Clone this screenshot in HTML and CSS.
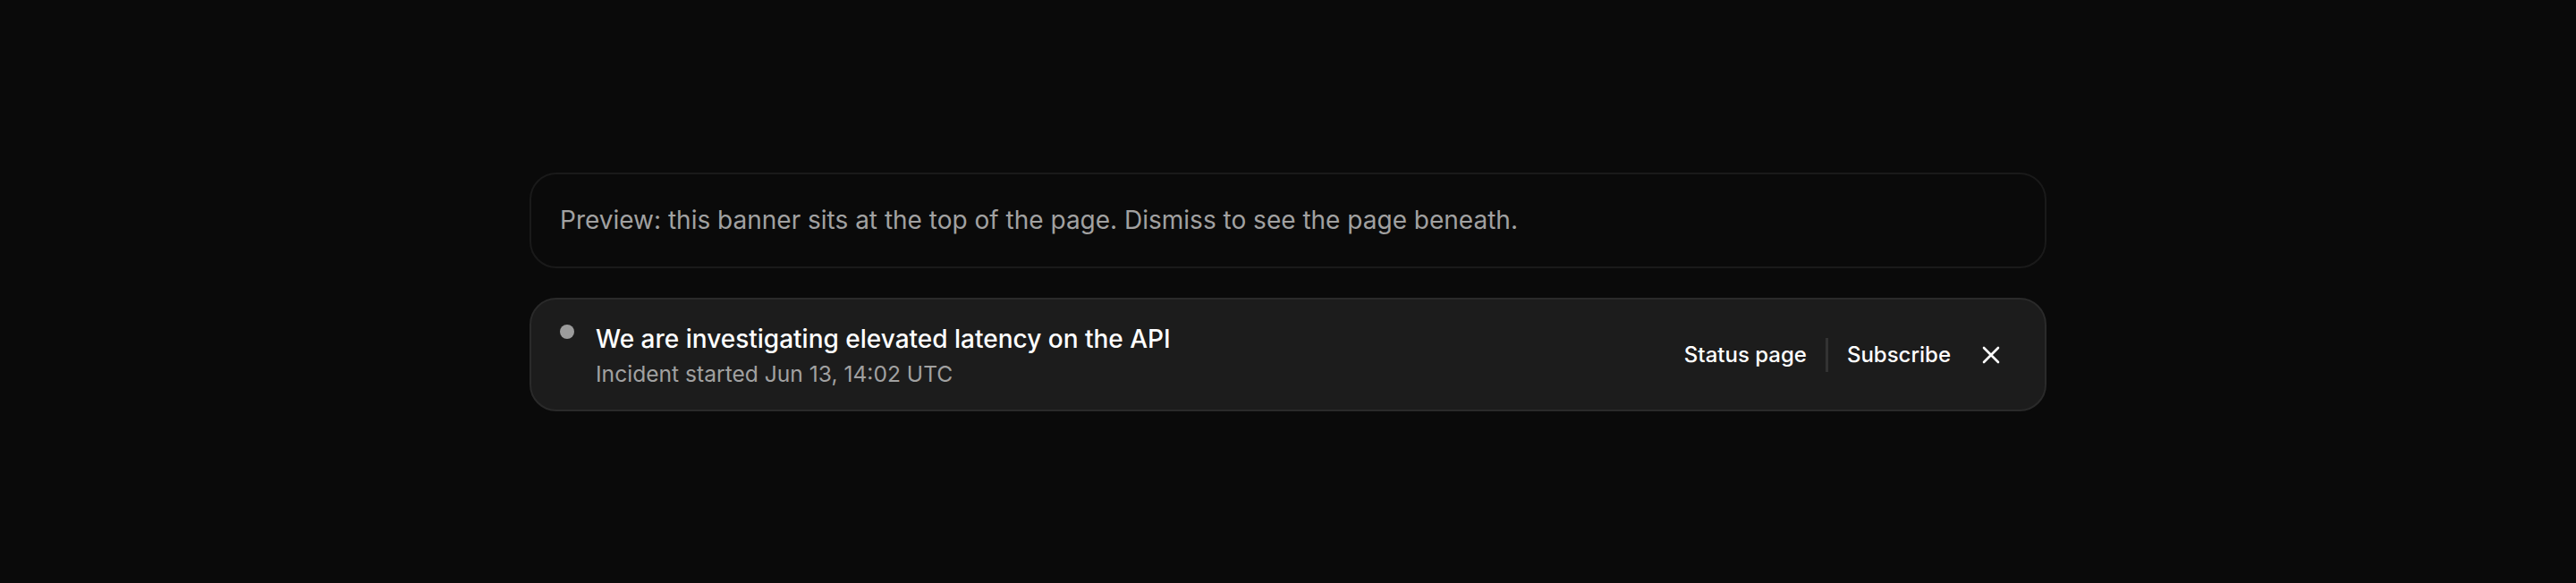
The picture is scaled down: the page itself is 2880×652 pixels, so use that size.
FILE: index.html
```html
<!DOCTYPE html>
<html lang="en">
<head>
    <meta charset="UTF-8">
    <meta name="viewport" content="width=device-width, initial-scale=1.0">
    <title>Incident banner</title>
    <link rel="stylesheet" href="styles.css">
</head>
<body>
    <div class="stage">
        <div class="preview-note">
            Preview: this banner sits at the top of the page. Dismiss to see the page beneath.
        </div>

        <div class="banner">
            <span class="banner-dot"></span>
            <div class="banner-text">
                <div class="banner-title">We are investigating elevated latency on the API</div>
                <div class="banner-meta">Incident started Jun 13, 14:02 UTC</div>
            </div>
            <div class="banner-actions">
                <a href="#" class="banner-link">Status page</a>
                <span class="banner-divider"></span>
                <a href="#" class="banner-link">Subscribe</a>
                <button class="banner-close" aria-label="Dismiss">
                    <svg width="20" height="20" viewBox="0 0 20 20" fill="none" stroke="currentColor" stroke-width="2.6" stroke-linecap="round">
                        <path d="M2 2L18 18M18 2L2 18"/>
                    </svg>
                </button>
            </div>
        </div>
    </div>
</body>
</html>
```

FILE: styles.css
```css
body {
    background-color: #0a0a0a;
    color: #fff;
    font-family: Inter, "Noto Sans", sans-serif;
    margin: 0;
    padding: 0;
}

.stage {
    width: 1696px;
    height: 652px;
    margin: 0 auto;
    display: flex;
    flex-direction: column;
    justify-content: center;
    gap: 33px;
    box-sizing: border-box;
}

.preview-note {
    border: 2px solid #1a1a1a;
    border-radius: 30px;
    background-color: #0a0a0a;
    color: #a1a1a1;
    font-size: 28px;
    line-height: 40px;
    padding: 31px 32px 32px;
}

.banner {
    display: flex;
    align-items: flex-start;
    border: 2px solid #2a2a2a;
    border-radius: 30px;
    background-color: #1c1c1c;
    padding: 24px 42px 23px 32px;
}

.banner-dot {
    width: 16px;
    height: 16px;
    border-radius: 50%;
    background-color: #9c9c9c;
    margin-top: 4px;
    flex-shrink: 0;
}

.banner-text {
    margin-left: 24px;
    flex: 1;
}

.banner-title {
    font-size: 28px;
    font-weight: 500;
    line-height: 40px;
    color: #fff;
}

.banner-meta {
    font-size: 24.6px;
    line-height: 34px;
    color: #a1a1a1;
    margin-top: 2px;
}

.banner-actions {
    display: flex;
    align-items: center;
    gap: 21px;
    align-self: center;
}

.banner-link {
    color: #fff;
    text-decoration: none;
    font-size: 24px;
    font-weight: 500;
}

.banner-divider {
    width: 3px;
    height: 38px;
    background-color: #333;
}

.banner-close {
    background: none;
    border: 0;
    color: #fff;
    padding: 8px;
    margin-left: 6px;
    display: flex;
    cursor: pointer;
}
```
